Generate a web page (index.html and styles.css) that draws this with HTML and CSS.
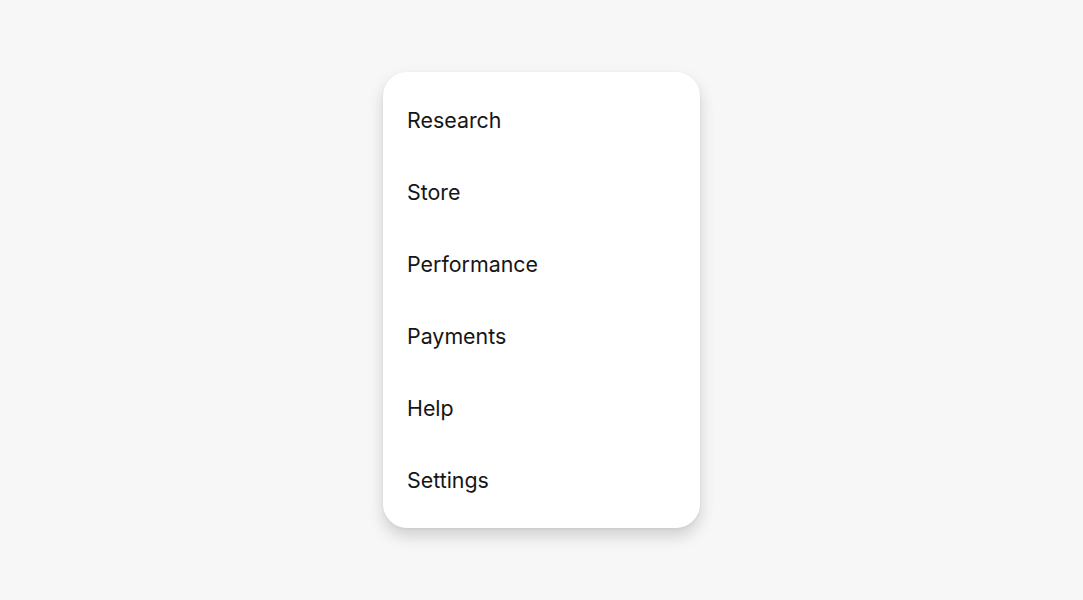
FILE: index.html
```html
<!DOCTYPE html>
<html lang="en">
<head>
  <meta charset="UTF-8">
  <meta name="viewport" content="width=device-width, initial-scale=1.0">
  <title>Menu</title>
  <link rel="stylesheet" href="styles.css">
</head>
<body>
  <div class="menu">
    <div class="menu-item">Research</div>
    <div class="menu-item">Store</div>
    <div class="menu-item">Performance</div>
    <div class="menu-item">Payments</div>
    <div class="menu-item">Help</div>
    <div class="menu-item">Settings</div>
  </div>
</body>
</html>
```
FILE: styles.css
```css
html, body {
  height: 100%;
}
body {
  margin: 0;
  background: #f7f7f7;
  font-family: 'Inter', 'Roboto', sans-serif;
  color: #161616;
  display: flex;
  justify-content: center;
  align-items: center;
}
.menu {
  width: 317px;
  box-sizing: border-box;
  padding: 13px 0 11px;
  background: #fff;
  border-radius: 24px;
  box-shadow: 0 8px 16px rgba(0, 0, 0, 0.16), 0 1px 3px rgba(0, 0, 0, 0.06);
}
.menu-item {
  height: 72px;
  display: flex;
  align-items: center;
  padding: 0 24px;
  font-size: 21.4px;
  line-height: 1;
}
```
